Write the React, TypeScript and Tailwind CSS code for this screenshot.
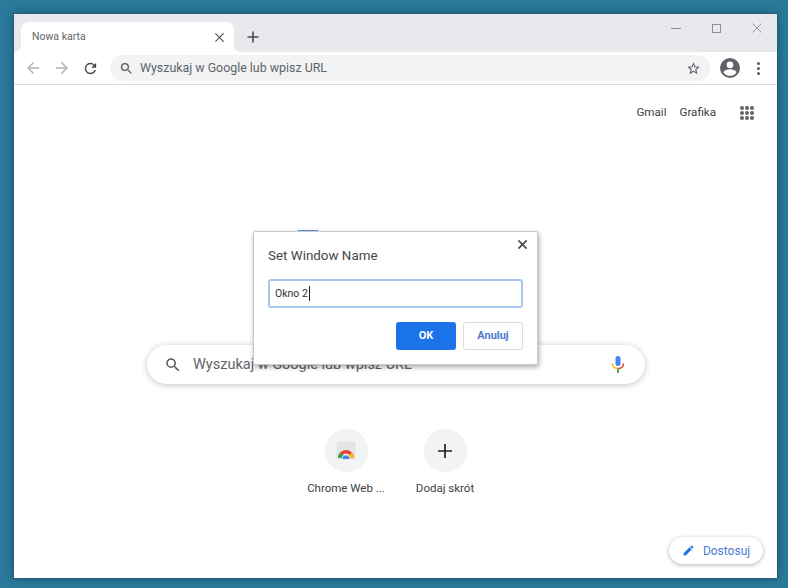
const font = "font-['Roboto','Liberation_Sans',sans-serif]";

function Arrow({ flip }: { flip?: boolean }) {
  return (
    <svg width="18" height="18" viewBox="0 0 24 24" fill="#b0b3b8" className={flip ? "rotate-180" : ""}>
      <path d="M20 11H7.83l5.59-5.59L12 4l-8 8 8 8 1.41-1.41L7.83 13H20v-2z" />
    </svg>
  );
}

function SearchIcon({ size, color }: { size: number; color: string }) {
  return (
    <svg width={size} height={size} viewBox="0 0 24 24" fill={color}>
      <path d="M15.5 14h-.79l-.28-.27A6.47 6.47 0 0 0 16 9.5 6.5 6.5 0 1 0 9.5 16c1.61 0 3.09-.59 4.23-1.57l.27.28v.79l5 4.99L20.49 19l-4.99-5zm-6 0C7.01 14 5 11.99 5 9.5S7.01 5 9.5 5 14 7.01 14 9.5 11.99 14 9.5 14z" />
    </svg>
  );
}

function Close({ size, color, width }: { size: number; color: string; width: number }) {
  return (
    <svg width={size} height={size} viewBox="0 0 12 12" stroke={color} strokeWidth={width} fill="none">
      <path d="M1.5 1.5l9 9M10.5 1.5l-9 9" />
    </svg>
  );
}

function TitleBar() {
  return (
    <div className="flex h-[38px] shrink-0 bg-[#e7e9ec] pl-[7px]">
      <div className="relative mt-2 flex h-[30px] w-[213px] items-center justify-between rounded-t-[8px] bg-white pl-[11px] pr-[9px]">
        {/* flared bottom corners of the tab */}
        <div className="absolute bottom-0 left-[-7px] h-[7px] w-[7px] bg-white">
          <div className="h-full w-full rounded-br-[7px] bg-[#e7e9ec]" />
        </div>
        <div className="absolute bottom-0 right-[-7px] h-[7px] w-[7px] bg-white">
          <div className="h-full w-full rounded-bl-[7px] bg-[#e7e9ec]" />
        </div>
        <span className="text-[10.5px] text-[#5f6368]">Nowa karta</span>
        <Close size={11} color="#55585c" width={1.4} />
      </div>
      <div className="mt-2 ml-[12px] flex h-[30px] w-[14px] items-center">
        <svg width="14" height="14" viewBox="0 0 14 14" stroke="#4a4d51" strokeWidth="1.6">
          <path d="M7 1.5v11M1.5 7h11" />
        </svg>
      </div>
      <div className="ml-auto flex h-[28px] items-center pr-[14px]">
        <div className="h-px w-[10px] bg-[#8c9094]" />
        <div className="ml-[31px] mr-[30px] h-[9px] w-[9px] border border-[#8c9094]" />
        <Close size={12} color="#8c9094" width={0.9} />
      </div>
    </div>
  );
}

function Toolbar() {
  return (
    <div className="flex h-[33px] shrink-0 items-center border-b border-[#dadce0] bg-white">
      <div className="ml-[10px] flex items-center gap-[11px]">
        <Arrow />
        <Arrow flip />
        <svg width="17" height="17" viewBox="0 0 24 24" fill="#45484c">
          <path d="M17.65 6.35A7.96 7.96 0 0 0 12 4a8 8 0 1 0 7.73 10h-2.08A6 6 0 1 1 12 6c1.66 0 3.14.69 4.22 1.78L13 11h7V4l-2.35 2.35z" />
        </svg>
      </div>
      <div className="ml-[11px] flex h-[26px] w-[600px] items-center rounded-full bg-[#f1f3f4] pl-[9px] pr-[9px]">
        <SearchIcon size={15} color="#55585c" />
        <span className="ml-[6px] text-[12.4px] text-[#5f6368]">Wyszukaj w Google lub wpisz URL</span>
        <svg className="ml-auto" width="15" height="15" viewBox="0 0 24 24" fill="#55585c">
          <path d="M22 9.24l-7.19-.62L12 2 9.19 8.63 2 9.24l5.46 4.73L5.82 21 12 17.27 18.18 21l-1.63-7.03L22 9.24zM12 15.4l-3.76 2.27 1-4.28-3.32-2.88 4.38-.38L12 6.1l1.71 4.04 4.38.38-3.32 2.88 1 4.28L12 15.4z" />
        </svg>
      </div>
      <svg className="ml-[10px]" width="20" height="20" viewBox="0 0 20 20" fill="#5f6368">
        <path d="M10 0a10 10 0 1 0 0 20 10 10 0 0 0 0-20zm0 3.6a3.3 3.3 0 1 1 0 6.6 3.3 3.3 0 0 1 0-6.6zm0 14.2c-2.7 0-5-1.3-6.4-3.4 0-2 4.3-3.1 6.4-3.1s6.4 1.1 6.4 3.1c-1.4 2.1-3.7 3.4-6.4 3.4z" />
      </svg>
      <div className="ml-[17px] flex flex-col gap-[2px]">
        <div className="h-[3px] w-[3px] rounded-full bg-[#55585c]" />
        <div className="h-[3px] w-[3px] rounded-full bg-[#55585c]" />
        <div className="h-[3px] w-[3px] rounded-full bg-[#55585c]" />
      </div>
    </div>
  );
}

function Shortcut({ label, children }: { label: string; children: React.ReactNode }) {
  return (
    <div className="flex w-[99px] flex-col items-center">
      <div className="flex h-[43px] w-[43px] items-center justify-center rounded-full bg-[#f1f3f4]">{children}</div>
      <span className="mt-[8px] whitespace-nowrap text-[11.5px] leading-[16px] text-[#3c4043]">{label}</span>
    </div>
  );
}

function Dialog() {
  return (
    <div className="absolute left-[239px] top-[146px] flex h-[134px] w-[285px] flex-col rounded-[2px] border border-[#c9cbce] bg-white pl-[14px] pr-[14px] shadow-[1px_2px_5px_rgba(0,0,0,0.35)]">
      <div className="absolute right-[9px] top-[7px]">
        <Close size={11} color="#4a4d51" width={1.8} />
      </div>
      <div className="mt-[15px] text-[13.4px] leading-[18px] text-[#444749]">Set Window Name</div>
      <div className="mt-[14px] flex h-[29px] items-center rounded-[3px] border-2 border-[#a9c6ee] pl-[5px] text-[10.5px] text-[#333]">
        Okno 2<span className="ml-px h-[15px] w-px bg-[#222]" />
      </div>
      <div className="mt-[14px] flex justify-end gap-[7px]">
        <div className="flex h-[28px] w-[60px] items-center justify-center rounded-[3px] bg-[#1a73e8] text-[11px] font-bold text-white">OK</div>
        <div className="flex h-[28px] w-[60px] items-center justify-center rounded-[3px] border border-[#dadce0] bg-white text-[11px] font-bold text-[#4a7bd0]">Anuluj</div>
      </div>
    </div>
  );
}

function NewTabPage() {
  return (
    <div className="relative flex min-h-0 flex-1 flex-col items-center bg-white">
      <div className="flex h-[56px] w-full items-center justify-end pr-[23px] text-[11.6px] text-[#3c4043]">
        <span>Gmail</span>
        <span className="ml-[13px]">Grafika</span>
        <div className="ml-[24px] grid grid-cols-3 gap-[1px]">
          {[0, 1, 2, 3, 4, 5, 6, 7, 8].map((i) => (
            <div key={i} className="h-[4px] w-[4px] rounded-full bg-[#5f6368]" />
          ))}
        </div>
      </div>
      <div className="ml-[-176px] mt-[89px] h-[2px] w-[22px] rounded-t-full bg-[#5c8fdc]" />
      <div className="ml-px mt-[113px] flex h-[39px] w-[498px] items-center rounded-full bg-white pl-[17px] pr-[19px] shadow-[0_1px_6px_rgba(32,33,36,0.28)]">
        <SearchIcon size={18} color="#55585c" />
        <span className="ml-[11px] text-[14.5px] text-[#5f6368]">Wyszukaj w Google lub wpisz URL</span>
        <svg className="ml-auto" width="16" height="20" viewBox="0 0 16 20" fill="none">
          <rect x="5.5" y="1" width="5" height="10" rx="2.5" fill="#4285f4" />
          <path d="M2.5 8.5c0 3 2.4 5 5.5 5" stroke="#fbbc05" strokeWidth="1.6" />
          <path d="M13.5 8.5c0 3-2.4 5-5.5 5" stroke="#ea4335" strokeWidth="1.6" />
          <path d="M8 13.5V18" stroke="#34a853" strokeWidth="1.8" />
        </svg>
      </div>
      <div className="mt-[45px] flex">
        <Shortcut label="Chrome Web ...">
          <svg width="20" height="20" viewBox="0 0 20 20" fill="none">
            <rect x="0.5" y="0.5" width="19" height="18" fill="#e4e5e7" />
            <path d="M2 17a8 8 0 0 1 16 0h-3.5a4.5 4.5 0 0 0-9 0z" fill="#ea4335" />
            <path d="M2 17a8 8 0 0 1 2.3-5.6l3 3A4.5 4.5 0 0 0 5.5 17z" fill="#34a853" />
            <path d="M18 17a8 8 0 0 0-2.3-5.6l-3 3a4.5 4.5 0 0 1 1.8 2.6z" fill="#fbbc05" />
            <path d="M6.5 18a3.5 3.5 0 0 1 7 0z" fill="#4285f4" />
          </svg>
        </Shortcut>
        <Shortcut label="Dodaj skrót">
          <svg width="14" height="14" viewBox="0 0 14 14" stroke="#202124" strokeWidth="1.7">
            <path d="M7 0v14M0 7h14" />
          </svg>
        </Shortcut>
      </div>
      <div className="absolute bottom-[14px] right-[14px] flex h-[27px] w-[94px] items-center justify-center gap-[8px] rounded-full bg-white shadow-[0_1px_4px_rgba(32,33,36,0.35)]">
        <svg width="13" height="13" viewBox="0 0 24 24" fill="#1a73e8">
          <path d="M3 17.25V21h3.75L17.81 9.94l-3.75-3.75L3 17.25zM20.71 7.04a1 1 0 0 0 0-1.41l-2.34-2.34a1 1 0 0 0-1.41 0l-1.83 1.83 3.75 3.75 1.83-1.83z" />
        </svg>
        <span className="text-[12px] text-[#4a7bd0]">Dostosuj</span>
      </div>
      <Dialog />
    </div>
  );
}

export default function App() {
  return (
    <div className={`flex h-[588px] w-[788px] flex-col bg-[#2b7a9c] pb-[10px] pl-[14px] pr-[11px] pt-[14px] ${font}`}>
      <div className="flex flex-1 flex-col overflow-hidden shadow-[0_0_0_1px_#1f5f78,0_0_10px_rgba(0,30,50,0.45)]">
        <TitleBar />
        <Toolbar />
        <NewTabPage />
      </div>
    </div>
  );
}
